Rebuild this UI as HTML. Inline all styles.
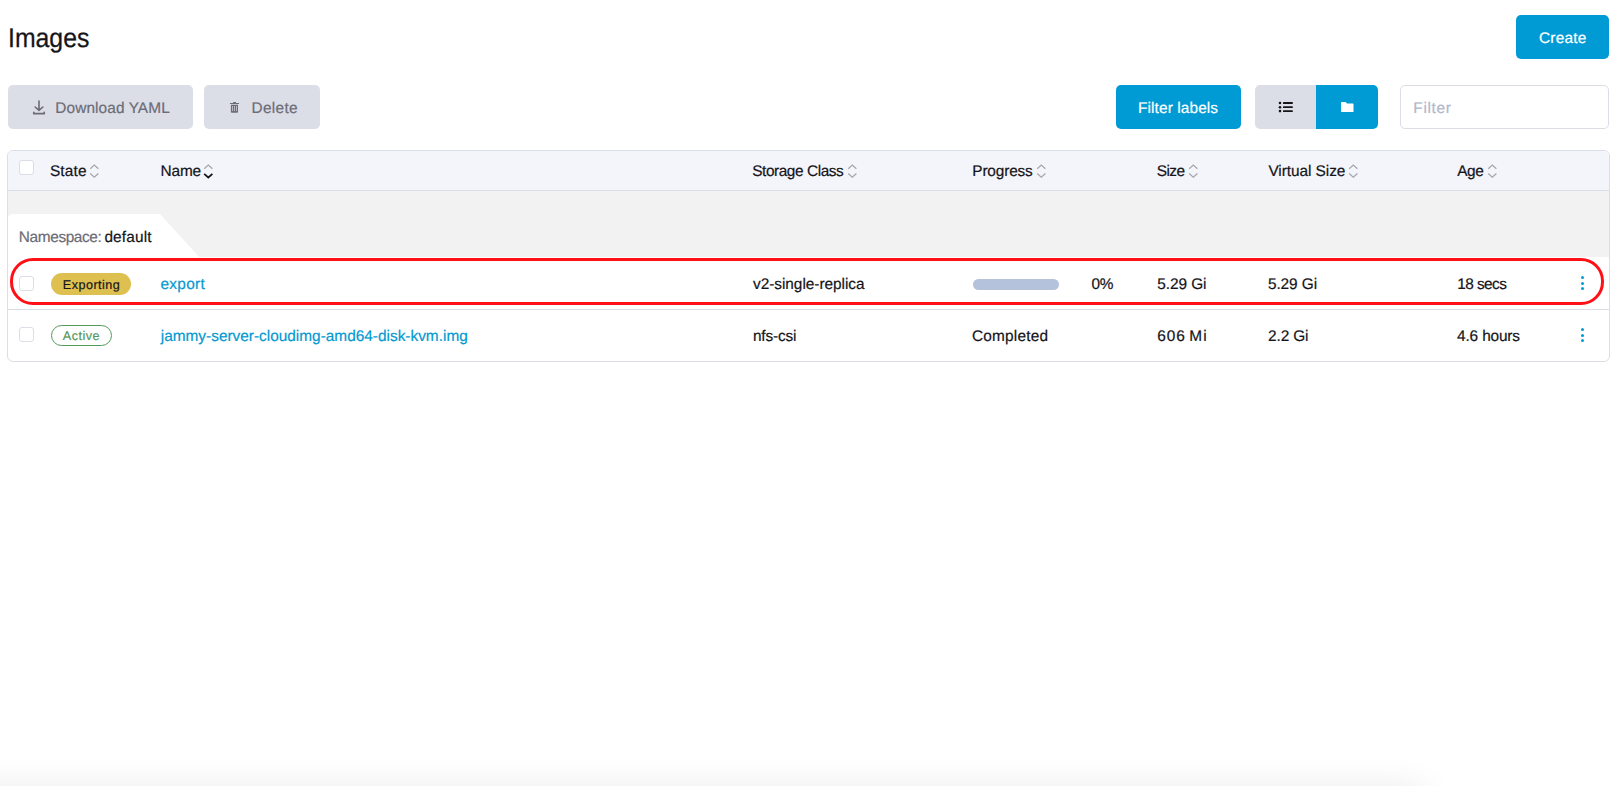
<!DOCTYPE html>
<html>
<head>
<meta charset="utf-8">
<style>
html,body{margin:0;padding:0;}
body{width:1623px;height:786px;position:relative;overflow:hidden;background:#fff;font-family:"Liberation Sans",sans-serif;color:#141419;text-rendering:geometricPrecision;}
.a{position:absolute;white-space:nowrap;line-height:1;-webkit-text-stroke:0.2px currentColor;}
.btn{position:absolute;border-radius:5px;}
.gray{background:#dcdee7;}
.blue{background:#009bd4;}
.cb{position:absolute;width:13px;height:13px;border:1px solid #dcdee7;border-radius:3px;background:#fff;}
.sort{position:absolute;width:11px;height:15px;}
.dots{position:absolute;width:3px;}
.dots i{display:block;width:3px;height:3px;border-radius:50%;background:#039ad2;margin-bottom:2.7px;}
</style>
</head>
<body>
<!-- Create -->
<div class="btn blue" style="left:1516px;top:15px;width:93px;height:44px;"></div>

<!-- Download YAML -->
<div class="btn gray" style="left:8px;top:85px;width:185px;height:44px;"></div>
<svg class="a" style="left:32px;top:100px;" width="14" height="15" viewBox="0 0 14 15">
  <path d="M7 1 V10 M3.1 7 L7 10.4 L10.9 7" stroke="#6c6c76" stroke-width="1.6" fill="none" stroke-linecap="round" stroke-linejoin="round"/>
  <path d="M1.8 12.3 V13.7 H12.2 V12.3" stroke="#6c6c76" stroke-width="1.7" fill="none" stroke-linecap="round" stroke-linejoin="round"/>
</svg>

<!-- Delete -->
<div class="btn gray" style="left:204px;top:85px;width:116px;height:44px;"></div>
<svg class="a" style="left:229px;top:101px;" width="11" height="13" viewBox="0 0 11 13">
  <rect x="0.9" y="1.9" width="9.2" height="1.2" rx="0.5" fill="#6c6c76"/>
  <rect x="4" y="0.9" width="3" height="1.4" rx="0.6" fill="#6c6c76"/>
  <path d="M1.9 3.8 H9 V11 Q9 11.8 8.2 11.8 H2.7 Q1.9 11.8 1.9 11 Z" fill="#6c6c76"/>
  <rect x="3.05" y="5" width="0.75" height="5.1" fill="#d3d5de"/>
  <rect x="5.1" y="5" width="0.75" height="5.1" fill="#d3d5de"/>
  <rect x="7.1" y="5" width="0.75" height="5.1" fill="#d3d5de"/>
</svg>

<!-- Filter labels -->
<div class="btn blue" style="left:1116px;top:85px;width:125px;height:44px;"></div>

<!-- toggle group -->
<div class="btn gray" style="left:1255px;top:85px;width:61px;height:44px;border-radius:5px 0 0 5px;"></div>
<div class="btn blue" style="left:1316px;top:85px;width:62px;height:44px;border-radius:0 5px 5px 0;"></div>
<svg class="a" style="left:1278px;top:101px;" width="16" height="12" viewBox="0 0 16 12">
  <circle cx="2" cy="2" r="1.3" fill="#141419"/>
  <circle cx="2" cy="6.2" r="1.3" fill="#141419"/>
  <circle cx="2" cy="10.1" r="1.3" fill="#141419"/>
  <rect x="5" y="1.1" width="9.8" height="1.8" rx="0.5" fill="#141419"/>
  <rect x="5" y="5.3" width="9.8" height="1.8" rx="0.5" fill="#141419"/>
  <rect x="5" y="9.2" width="9.8" height="1.8" rx="0.5" fill="#141419"/>
</svg>
<svg class="a" style="left:1340px;top:102px;" width="14" height="11" viewBox="0 0 14 11">
  <path d="M1 0.8 Q1 0 1.8 0 H5.6 L7 1.6 H12.8 Q13.5 1.6 13.5 2.3 V9.4 Q13.5 10.1 12.8 10.1 H1.7 Q1 10.1 1 9.4 Z" fill="#fff"/>
</svg>

<!-- Filter input -->
<div class="a" style="left:1400px;top:85px;width:207px;height:42px;border:1px solid #dcdee7;border-radius:5px;background:#fff;"></div>

<!-- Table -->
<div class="a" style="left:7px;top:150px;width:1601px;height:210px;border:1px solid #dcdee7;border-radius:6px;background:#fff;overflow:hidden;">
  <div class="a" style="left:0;top:0;width:1601px;height:39px;background:#f4f5fa;border-bottom:1px solid #dcdee7;"></div>
  <div class="a" style="left:0;top:40px;width:1601px;height:66px;background:#f2f2f2;"></div>
  <svg class="a" style="left:0;top:63px;" width="200" height="44" viewBox="0 0 200 44">
    <path d="M0 44 V5 Q0 0 5 0 H152 L192 44 Z" fill="#fff"/>
  </svg>
  <div class="a" style="left:0;top:158px;width:1601px;height:1px;background:#dcdee7;"></div>
</div>

<!-- header -->
<div class="cb" style="left:19px;top:160px;"></div>

<!-- sort icons -->
<svg class="sort" style="left:89px;top:164px;"><path d="M1.2 4.7 L5.3 1 L9.4 4.7 M1.2 9.5 L5.3 13.2 L9.4 9.5" stroke="#a4a4ac" stroke-width="1.2" fill="none"/></svg>
<svg class="sort" style="left:203.4px;top:164px;"><path d="M1.2 4.7 L5.3 1 L9.4 4.7" stroke="#a4a4ac" stroke-width="1.2" fill="none"/><path d="M1.2 9.8 L5.3 13.5 L9.4 9.8" stroke="#141419" stroke-width="1.7" fill="none"/></svg>
<svg class="sort" style="left:847px;top:164px;"><path d="M1.2 4.7 L5.3 1 L9.4 4.7 M1.2 9.5 L5.3 13.2 L9.4 9.5" stroke="#a4a4ac" stroke-width="1.2" fill="none"/></svg>
<svg class="sort" style="left:1036px;top:164px;"><path d="M1.2 4.7 L5.3 1 L9.4 4.7 M1.2 9.5 L5.3 13.2 L9.4 9.5" stroke="#a4a4ac" stroke-width="1.2" fill="none"/></svg>
<svg class="sort" style="left:1188px;top:164px;"><path d="M1.2 4.7 L5.3 1 L9.4 4.7 M1.2 9.5 L5.3 13.2 L9.4 9.5" stroke="#a4a4ac" stroke-width="1.2" fill="none"/></svg>
<svg class="sort" style="left:1348px;top:164px;"><path d="M1.2 4.7 L5.3 1 L9.4 4.7 M1.2 9.5 L5.3 13.2 L9.4 9.5" stroke="#a4a4ac" stroke-width="1.2" fill="none"/></svg>
<svg class="sort" style="left:1487px;top:164px;"><path d="M1.2 4.7 L5.3 1 L9.4 4.7 M1.2 9.5 L5.3 13.2 L9.4 9.5" stroke="#a4a4ac" stroke-width="1.2" fill="none"/></svg>

<!-- row 1 -->
<div class="cb" style="left:19px;top:276px;"></div>
<div class="a" style="left:51px;top:273px;width:80px;height:22px;border-radius:11px;background:#dec051;"></div>
<div class="a" style="left:973px;top:279px;width:86px;height:11px;border-radius:6px;background:#b4c2dc;"></div>
<div class="dots" style="left:1581px;top:276px;"><i></i><i></i><i></i></div>

<!-- row 2 -->
<div class="cb" style="left:19px;top:327px;"></div>
<div class="a" style="left:51px;top:325px;width:59px;height:19px;border-radius:11px;border:1px solid #55985c;"></div>
<div class="dots" style="left:1581px;top:328px;"><i></i><i></i><i></i></div>

<div class="a" style="left:8.29px;top:25.00px;font-size:27px;font-weight:400;-webkit-text-stroke:0.25px #141419;letter-spacing:0.00px;transform:scaleX(0.9189);transform-origin:0 0;color:#141419;">Images</div>
<div class="a" style="left:1538.91px;top:31.00px;font-size:15.4px;font-weight:400;-webkit-text-stroke:0.2px #fff;letter-spacing:0.24px;color:#fff;">Create</div>
<div class="a" style="left:55.30px;top:101.00px;font-size:15.4px;font-weight:400;letter-spacing:0.10px;color:#6c6c76;">Download YAML</div>
<div class="a" style="left:251.54px;top:101.00px;font-size:15.4px;font-weight:400;letter-spacing:0.31px;color:#6c6c76;">Delete</div>
<div class="a" style="left:1138.02px;top:101.00px;font-size:15.4px;font-weight:400;-webkit-text-stroke:0.2px #fff;letter-spacing:0.11px;color:#fff;">Filter labels</div>
<div class="a" style="left:1413.35px;top:101.00px;font-size:15.4px;font-weight:400;letter-spacing:0.65px;color:#b1b7c9;">Filter</div>
<div class="a" style="left:49.90px;top:164.00px;font-size:15.4px;font-weight:400;letter-spacing:0.21px;color:#141419;">State</div>
<div class="a" style="left:160.54px;top:164.00px;font-size:15.4px;font-weight:400;letter-spacing:-0.14px;color:#141419;">Name</div>
<div class="a" style="left:752.23px;top:164.00px;font-size:15.4px;font-weight:400;letter-spacing:-0.43px;color:#141419;">Storage Class</div>
<div class="a" style="left:972.30px;top:164.00px;font-size:15.4px;font-weight:400;letter-spacing:-0.16px;color:#141419;">Progress</div>
<div class="a" style="left:1156.77px;top:164.00px;font-size:15.4px;font-weight:400;letter-spacing:-0.56px;color:#141419;">Size</div>
<div class="a" style="left:1268.39px;top:164.00px;font-size:15.4px;font-weight:400;letter-spacing:-0.05px;color:#141419;">Virtual Size</div>
<div class="a" style="left:1457.25px;top:164.00px;font-size:15.4px;font-weight:400;letter-spacing:-0.42px;color:#141419;">Age</div>
<div class="a" style="left:18.85px;top:230.00px;font-size:15.4px;font-weight:400;letter-spacing:-0.38px;color:#6c6c76;">Namespace:</div>
<div class="a" style="left:104.39px;top:230.00px;font-size:15.4px;font-weight:400;letter-spacing:0.15px;color:#141419;">default</div>
<div class="a" style="left:62.82px;top:279.00px;font-size:12.6px;font-weight:400;letter-spacing:0.47px;color:#141419;">Exporting</div>
<div class="a" style="left:160.50px;top:277.00px;font-size:15.4px;font-weight:400;letter-spacing:0.29px;color:#039ad2;">export</div>
<div class="a" style="left:752.99px;top:277.00px;font-size:15.4px;font-weight:400;letter-spacing:-0.03px;color:#141419;">v2-single-replica</div>
<div class="a" style="left:1091.38px;top:277.00px;font-size:15.4px;font-weight:400;letter-spacing:-0.26px;color:#141419;">0%</div>
<div class="a" style="left:1157.20px;top:277.00px;font-size:15.4px;font-weight:400;letter-spacing:-0.05px;color:#141419;">5.29 Gi</div>
<div class="a" style="left:1267.93px;top:277.00px;font-size:15.4px;font-weight:400;letter-spacing:-0.07px;color:#141419;">5.29 Gi</div>
<div class="a" style="left:1457.17px;top:277.00px;font-size:15.4px;font-weight:400;letter-spacing:-0.55px;color:#141419;">18 secs</div>
<div class="a" style="left:62.86px;top:330.00px;font-size:12.6px;font-weight:400;letter-spacing:0.47px;color:#55985c;">Active</div>
<div class="a" style="left:160.75px;top:329.00px;font-size:15.4px;font-weight:400;letter-spacing:-0.00px;color:#039ad2;">jammy-server-cloudimg-amd64-disk-kvm.img</div>
<div class="a" style="left:752.94px;top:329.00px;font-size:15.4px;font-weight:400;letter-spacing:-0.15px;color:#141419;">nfs-csi</div>
<div class="a" style="left:972.08px;top:329.00px;font-size:15.4px;font-weight:400;letter-spacing:0.18px;color:#141419;">Completed</div>
<div class="a" style="left:1157.13px;top:329.00px;font-size:15.4px;font-weight:400;word-spacing:-2px;letter-spacing:1.05px;color:#141419;">606 Mi</div>
<div class="a" style="left:1268.11px;top:329.00px;font-size:15.4px;font-weight:400;letter-spacing:-0.13px;color:#141419;">2.2 Gi</div>
<div class="a" style="left:1457.12px;top:329.00px;font-size:15.4px;font-weight:400;letter-spacing:-0.16px;color:#141419;">4.6 hours</div>

<!-- red annotation -->
<div class="a" style="left:10px;top:258px;width:1588px;height:41px;border:3px solid #fe1016;border-radius:23px;"></div>

<!-- bottom shadow -->
<div class="a" style="left:-60px;top:792px;width:1480px;height:60px;background:#fff;box-shadow:0 0 36px 2px rgba(0,0,0,0.10);"></div>
</body>
</html>
